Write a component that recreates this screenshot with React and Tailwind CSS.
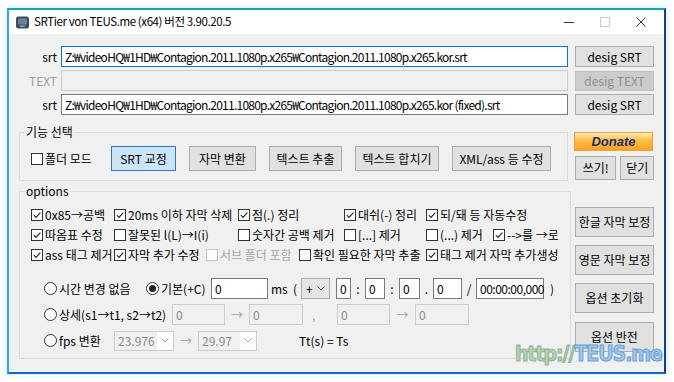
import React from 'react';

const FONT = { fontFamily: '"Noto Sans CJK KR", "Noto Sans", sans-serif' };

const Check = ({ checked, disabled, label, className = '' }) => (
  <div className={`flex items-center gap-[2px] whitespace-nowrap ${className}`}>
    <span
      className={`w-[12px] h-[12px] shrink-0 border bg-white flex items-center justify-center ${
        disabled ? 'border-[#c4c4c4]' : 'border-[#333333]'
      }`}
    >
      {checked && (
        <svg viewBox="0 0 10 10" className="w-[10px] h-[10px]">
          <path d="M1.8 5.2 L4 7.4 L8.4 2.6" stroke="#222" strokeWidth="1.1" fill="none" />
        </svg>
      )}
    </span>
    <span className={disabled ? 'text-[#a6a6a6]' : 'text-black'}>{label}</span>
  </div>
);

const Radio = ({ checked, label, className = '' }) => (
  <div className={`flex items-center gap-[2px] whitespace-nowrap ${className}`}>
    <span className="w-[13px] h-[13px] shrink-0 rounded-full border border-[#333333] bg-white flex items-center justify-center">
      {checked && <span className="w-[7px] h-[7px] rounded-full bg-[#222]" />}
    </span>
    <span>{label}</span>
  </div>
);

const Btn = ({ children, className = '' }) => (
  <button
    className={`flex items-center justify-center border border-[#adadad] bg-[#e1e1e1] text-black text-[12px] whitespace-nowrap ${className}`}
  >
    {children}
  </button>
);

const Box = ({ value, disabled, className = '' }) => (
  <div
    className={`h-[21px] border flex items-center px-[3px] whitespace-nowrap ${
      disabled ? 'border-[#cccccc] bg-[#f0f0f0] text-[#8a8a8a]' : 'border-[#7a7a7a] bg-white text-black'
    } ${className}`}
  >
    {value}
  </div>
);

const Combo = ({ value, className = '' }) => (
  <div className={`h-[20px] border border-[#cccccc] bg-[#f0f0f0] flex items-center text-[#8a8a8a] ${className}`}>
    <span className="flex-1 pl-[3px]">{value}</span>
    <span className="w-[16px] h-full bg-white flex items-center justify-center">
      <svg viewBox="0 0 8 5" className="w-[8px] h-[5px]">
        <path d="M0.5 0.5 L4 4 L7.5 0.5" stroke="#a0a0a0" fill="none" />
      </svg>
    </span>
  </div>
);

const Arrow = ({ className = '' }) => (
  <span className={`text-center text-[#a0a0a0] ${className}`}>→</span>
);

export default function App() {
  return (
    <div className="w-[674px] h-[382px] bg-white pt-[8px] pl-[7px] relative overflow-hidden text-[12px]" style={FONT}>
      <div className="w-[659px] h-[366px] border-2 border-t-[#17a5ae] border-l-[#2da9e3] border-r-[#1d3b8e] border-b-[#1766c2] bg-[#f0f0f0] flex flex-col shadow-[0_0_6px_rgba(40,150,200,0.25)]">
        {/* title bar */}
        <div className="h-[24px] bg-white flex items-center shrink-0">
          <svg viewBox="0 0 13 13" className="w-[13px] h-[13px] ml-[7px]">
            <rect x="0" y="0.5" width="13" height="12" rx="2.5" fill="#3b4a5c" />
            <rect x="2" y="2.5" width="9" height="6" rx="1" fill="#6f8197" />
            <rect x="4" y="9.5" width="5" height="1.5" fill="#8fa0b4" />
          </svg>
          <span className="ml-[5px] text-[11.5px] tracking-[-0.4px] text-black">SRTier von TEUS.me (x64) 버전 3.90.20.5</span>
          <div className="ml-auto flex items-center h-full text-[#333]">
            <span className="w-[36px] flex justify-center">
              <span className="w-[10px] h-[1px] bg-[#333]" />
            </span>
            <span className="w-[36px] flex justify-center">
              <span className="w-[10px] h-[10px] border border-[#c8c8c8]" />
            </span>
            <span className="w-[36px] flex justify-center mr-[5px]">
              <svg viewBox="0 0 10 10" className="w-[10px] h-[10px]">
                <path d="M0.5 0.5 L9.5 9.5 M9.5 0.5 L0.5 9.5" stroke="#333" strokeWidth="1" />
              </svg>
            </span>
          </div>
        </div>

        {/* file rows */}
        <div className="flex flex-col gap-[3px] pt-[12px]">
          <div className="flex items-center h-[21px]">
            <span className="w-[48px] text-right text-black">srt</span>
            <div className="ml-[4px] w-[507px] h-[21px] border border-[#0078d7] bg-white flex items-center px-[3px] whitespace-nowrap overflow-hidden tracking-[-0.75px]">
              Z:₩videoHQ₩1HD₩Contagion.2011.1080p.x265₩Contagion.2011.1080p.x265.kor.srt
            </div>
            <Btn className="ml-[7px] w-[79px] h-[21px]">desig SRT</Btn>
          </div>
          <div className="flex items-center h-[21px]">
            <span className="w-[48px] text-right text-[#a0a0a0]">TEXT</span>
            <div className="ml-[4px] w-[507px] h-[21px] border border-[#cccccc] bg-[#f0f0f0]" />
            <div className="ml-[7px] w-[79px] h-[20px] border border-[#bfbfbf] bg-[#cccccc] text-[#8f8f8f] flex items-center justify-center">
              desig TEXT
            </div>
          </div>
          <div className="flex items-center h-[21px]">
            <span className="w-[48px] text-right text-black">srt</span>
            <div className="ml-[4px] w-[507px] h-[21px] border border-[#7a7a7a] bg-white flex items-center px-[3px] whitespace-nowrap overflow-hidden tracking-[-0.75px]">
              Z:₩videoHQ₩1HD₩Contagion.2011.1080p.x265₩Contagion.2011.1080p.x265.kor (fixed).srt
            </div>
            <Btn className="ml-[7px] w-[79px] h-[21px]">desig SRT</Btn>
          </div>
        </div>

        {/* lower section */}
        <div className="flex pl-[10px] pt-[9px]">
          <div className="w-[549px] flex flex-col gap-[2px]">
            <fieldset className="border border-[#dcdcdc] h-[57px] px-[11px]">
              <legend className="px-[1px] ml-[-6px] text-black leading-[16px]">기능 선택</legend>
              <div className="flex items-center mt-[6px]">
                <Check label="폴더 모드" className="w-[80px]" />
                <button className="w-[65px] h-[25px] border border-[#2f78c0] bg-[#cce4f7] flex items-center justify-center">SRT 교정</button>
                <Btn className="ml-[13px] w-[67px] h-[25px]">자막 변환</Btn>
                <Btn className="ml-[13px] w-[73px] h-[25px]">텍스트 추출</Btn>
                <Btn className="ml-[13px] w-[84px] h-[25px]">텍스트 합치기</Btn>
                <Btn className="ml-[13px] w-[99px] h-[25px]">XML/ass 등 수정</Btn>
              </div>
            </fieldset>

            <fieldset className="border border-[#dcdcdc] h-[176px] px-[11px]">
              <legend className="px-[1px] ml-[-6px] text-black leading-[16px]">options</legend>
              <div className="flex flex-col gap-[1px] mt-[6px]">
                <div className="flex items-center h-[19px]">
                  <Check checked label="0x85→공백" className="w-[83px]" />
                  <Check checked label="20ms 이하 자막 삭제" className="w-[124px]" />
                  <Check checked label="점(.) 정리" className="w-[106px]" />
                  <Check checked label="대쉬(-) 정리" className="w-[82px]" />
                  <Check checked label="되/돼 등 자동수정" />
                </div>
                <div className="flex items-center h-[19px]">
                  <Check checked label="따옴표 수정" className="w-[83px]" />
                  <Check label="잘못된 l(L)→I(i)" className="w-[124px]" />
                  <Check label="숫자간 공백 제거" className="w-[106px]" />
                  <Check label="[...] 제거" className="w-[82px]" />
                  <Check label="(...) 제거" className="w-[67px]" />
                  <Check checked label="-->를 →로" />
                </div>
                <div className="flex items-center h-[19px]">
                  <Check checked label="ass 태그 제거" className="w-[83px]" />
                  <Check checked label="자막 추가 수정" className="w-[92px]" />
                  <Check disabled label="서브 폴더 포함" className="w-[93px]" />
                  <Check label="확인 필요한 자막 추출" className="w-[127px]" />
                  <Check checked label="태그 제거 자막 추가생성" />
                </div>
              </div>

              <div className="flex flex-col gap-[5px] mt-[14px] pl-[13px]">
                <div className="flex items-center h-[21px]">
                  <Radio label="시간 변경 없음" className="w-[102px]" />
                  <Radio checked label="기본(+C)" className="w-[65px]" />
                  <Box value="0" className="w-[57px]" />
                  <span className="ml-[3px] w-[22px]">ms</span>
                  <span className="w-[8px]">(</span>
                  <div className="w-[29px] h-[21px] border border-[#adadad] bg-[#e5e5e5] flex items-center">
                    <span className="pl-[4px] flex-1">+</span>
                    <svg viewBox="0 0 8 5" className="w-[8px] h-[5px] mr-[4px]">
                      <path d="M0.5 0.5 L4 4 L7.5 0.5" stroke="#555" fill="none" />
                    </svg>
                  </div>
                  <Box value="0" className="ml-[6px] w-[15px]" />
                  <span className="w-[14px] text-center">:</span>
                  <Box value="0" className="w-[20px]" />
                  <span className="w-[14px] text-center">:</span>
                  <Box value="0" className="w-[21px]" />
                  <span className="w-[13px] text-center">.</span>
                  <Box value="0" className="w-[29px]" />
                  <span className="w-[14px] text-center">/</span>
                  <Box value="00:00:00,000" className="w-[68px] tracking-[-0.5px]" />
                  <span className="ml-[6px]">)</span>
                </div>
                <div className="flex items-center h-[21px]">
                  <Radio label="상세(s1→t1, s2→t2)" className="w-[128px]" />
                  <Box disabled value="0" className="w-[53px]" />
                  <Arrow className="w-[24px]" />
                  <Box disabled value="0" className="w-[54px]" />
                  <span className="w-[34px] pl-[9px] text-[#a0a0a0]">,</span>
                  <Box disabled value="0" className="w-[53px]" />
                  <Arrow className="w-[25px]" />
                  <Box disabled value="0" className="w-[54px]" />
                </div>
                <div className="flex items-center h-[21px]">
                  <Radio label="fps 변환" className="w-[70px]" />
                  <Combo value="23.976" className="w-[60px]" />
                  <Arrow className="w-[24px]" />
                  <Combo value="29.97" className="w-[59px]" />
                  <span className="ml-[42px]">Tt(s) = Ts</span>
                </div>
              </div>
            </fieldset>
          </div>

          {/* right column */}
          <div className="ml-[6px] w-[80px] flex flex-col pt-[8px]">
            <button
              className="w-[79px] h-[19px] border border-[#e9a23b] bg-[linear-gradient(#ffecb8,#ffbd45_45%,#fba321)] flex items-center justify-center text-[#1c2d6e] italic font-bold text-[13px]"
              style={{ fontFamily: '"Liberation Sans", Arial, sans-serif' }}
            >
              Donate
            </button>
            <div className="flex mt-[5px] gap-[4px]">
              <Btn className="w-[42px] h-[24px] border-[#0078d7] ml-[1px]">쓰기!</Btn>
              <Btn className="w-[34px] h-[24px]">닫기</Btn>
            </div>
            <Btn className="w-[79px] h-[30px] ml-[1px] mt-[27px]">한글 자막 보정</Btn>
            <Btn className="w-[79px] h-[30px] ml-[1px] mt-[8px]">영문 자막 보정</Btn>
            <Btn className="w-[79px] h-[30px] ml-[1px] mt-[8px]">옵션 초기화</Btn>
            <Btn className="w-[79px] h-[30px] ml-[1px] mt-[9px]">옵션 반전</Btn>
          </div>
        </div>
      </div>

      {/* watermark */}
      <div
        className="absolute left-[515px] top-[344px] text-[21px] font-bold leading-none tracking-[-1px] whitespace-nowrap"
        style={{ fontFamily: '"DejaVu Sans Condensed", "Liberation Sans Narrow", "DejaVu Sans", sans-serif' }}
      >
        <span className="text-[#b5d3b0] [-webkit-text-stroke:1px_#8fb39a]">http://</span>
        <span className="text-[#9cc8ee] [-webkit-text-stroke:1px_#6d9fcf]">TEUS.me</span>
      </div>
    </div>
  );
}
